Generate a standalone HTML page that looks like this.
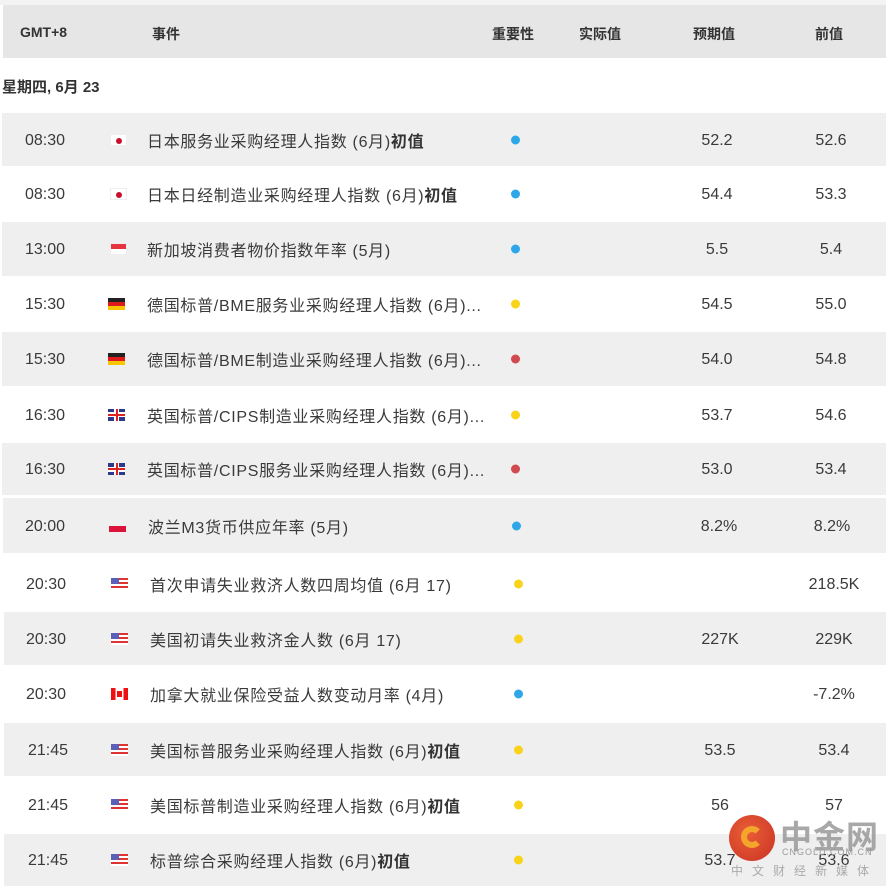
<!DOCTYPE html>
<html><head><meta charset="utf-8"><style>
*{margin:0;padding:0;box-sizing:border-box}
body{width:886px;height:886px;background:#fff;position:relative;overflow:hidden;font-family:"Liberation Sans","Noto Sans CJK SC",sans-serif;color:#3a3a3a;font-size:15px}
.a{position:absolute;white-space:nowrap}
.top{left:0;top:0;width:886px;height:5px;background:#f3f3f3}
.hd{left:3px;top:5px;width:883px;height:53px;background:#e6e6e6}
.h{font-size:14px;font-weight:bold;color:#333;top:24px}
.row{position:absolute;left:2px;width:884px}
.g{background:#efefef}
.t,.f,.e,.d,.v,.p{position:absolute;top:50%;transform:translateY(-50%)}
.t{width:60px;text-align:center;font-size:16px;margin-top:1px}
.e{font-size:16px;letter-spacing:0.7px}
.e b{font-weight:bold;color:#333}
.d{width:9px;height:9px;border-radius:50%}
.bl{background:#2ea7e8}.ye{background:#f9d21a}.re{background:#d04a4f}
.v,.p{width:80px;text-align:center;font-size:16px;margin-top:1px}
.f{width:17px;height:12px}
.uk{background:
 linear-gradient(#d22 0,#d22 0) center/100% 2px no-repeat,
 linear-gradient(#d22 0,#d22 0) center/2px 100% no-repeat,
 linear-gradient(#fff 0,#fff 0) center/100% 5px no-repeat,
 linear-gradient(#fff 0,#fff 0) center/5px 100% no-repeat,
 #2d3a8c}
.us{background:linear-gradient(#5a5fb8 0,#5a5fb8 0) 0 0/8px 6px no-repeat,repeating-linear-gradient(#d33 0,#d33 2px,#fff 2px,#fff 4px)}
</style></head><body>
<div class="a top"></div>
<div class="a hd"></div>
<div class="a h" style="left:20px">GMT+8</div>
<div class="a h" style="left:152px">事件</div>
<div class="a h" style="left:492px">重要性</div>
<div class="a h" style="left:579px">实际值</div>
<div class="a h" style="left:693px">预期值</div>
<div class="a h" style="left:815px">前值</div>
<div class="a" style="left:2px;top:76px;font-weight:bold;font-size:15px;color:#333">星期四, 6月 23</div>

<div class="row g" style="top:113px;height:53px"><span class="t" style="left:13px">08:30</span><span class="f" style="left:108px;background:#fff;border:1px solid #eee"><i style="position:absolute;left:5px;top:3px;width:6px;height:6px;border-radius:50%;background:#c8102e"></i></span><span class="e" style="left:145px">日本服务业采购经理人指数 (6月)<b>初值</b></span><span class="d bl" style="left:509px"></span><span class="v" style="left:675px">52.2</span><span class="p" style="left:789px">52.6</span></div>
<div class="row" style="top:166px;height:56px"><span class="t" style="left:13px">08:30</span><span class="f" style="left:108px;background:#fff;border:1px solid #eee"><i style="position:absolute;left:5px;top:3px;width:6px;height:6px;border-radius:50%;background:#c8102e"></i></span><span class="e" style="left:145px">日本日经制造业采购经理人指数 (6月)<b>初值</b></span><span class="d bl" style="left:509px"></span><span class="v" style="left:675px">54.4</span><span class="p" style="left:789px">53.3</span></div>
<div class="row g" style="top:222px;height:54px"><span class="t" style="left:13px">13:00</span><span class="f" style="left:108px;background:linear-gradient(#e53340 50%,#fff 50%);border:1px solid #eee"></span><span class="e" style="left:145px">新加坡消费者物价指数年率 (5月)</span><span class="d bl" style="left:509px"></span><span class="v" style="left:675px">5.5</span><span class="p" style="left:789px">5.4</span></div>
<div class="row" style="top:276px;height:56px"><span class="t" style="left:13px">15:30</span><span class="f" style="left:106px;background:linear-gradient(#222 33%,#dd1b1b 33%,#dd1b1b 66%,#f7c600 66%)"></span><span class="e" style="left:145px">德国标普/BME服务业采购经理人指数 (6月)...</span><span class="d ye" style="left:509px"></span><span class="v" style="left:675px">54.5</span><span class="p" style="left:789px">55.0</span></div>
<div class="row g" style="top:332px;height:54px"><span class="t" style="left:13px">15:30</span><span class="f" style="left:106px;background:linear-gradient(#222 33%,#dd1b1b 33%,#dd1b1b 66%,#f7c600 66%)"></span><span class="e" style="left:145px">德国标普/BME制造业采购经理人指数 (6月)...</span><span class="d re" style="left:509px"></span><span class="v" style="left:675px">54.0</span><span class="p" style="left:789px">54.8</span></div>
<div class="row" style="top:386px;height:57px"><span class="t" style="left:13px">16:30</span><span class="f uk" style="left:106px"></span><span class="e" style="left:145px">英国标普/CIPS制造业采购经理人指数 (6月)...</span><span class="d ye" style="left:509px"></span><span class="v" style="left:675px">53.7</span><span class="p" style="left:789px">54.6</span></div>
<div class="row g" style="top:443px;height:52px"><span class="t" style="left:13px">16:30</span><span class="f uk" style="left:106px"></span><span class="e" style="left:145px">英国标普/CIPS服务业采购经理人指数 (6月)...</span><span class="d re" style="left:509px"></span><span class="v" style="left:675px">53.0</span><span class="p" style="left:789px">53.4</span></div>
<div class="row g" style="top:498px;height:55px;left:3px"><span class="t" style="left:12px">20:00</span><span class="f" style="left:106px;background:linear-gradient(#f0f0f0 50%,#dc143c 50%)"></span><span class="e" style="left:145px">波兰M3货币供应年率 (5月)</span><span class="d bl" style="left:509px"></span><span class="v" style="left:676px">8.2%</span><span class="p" style="left:789px">8.2%</span></div>

<div class="row" style="top:556px;height:56px;left:4px"><span class="t" style="left:12px">20:30</span><span class="f us" style="left:107px"></span><span class="e" style="left:146px">首次申请失业救济人数四周均值 (6月 17)</span><span class="d ye" style="left:510px"></span><span class="p" style="left:790px">218.5K</span></div>
<div class="row g" style="top:612px;height:53px;left:4px"><span class="t" style="left:12px">20:30</span><span class="f us" style="left:107px"></span><span class="e" style="left:146px">美国初请失业救济金人数 (6月 17)</span><span class="d ye" style="left:510px"></span><span class="v" style="left:676px">227K</span><span class="p" style="left:790px">229K</span></div>
<div class="row" style="top:665px;height:58px;left:4px"><span class="t" style="left:12px">20:30</span><span class="f" style="left:107px;background:linear-gradient(90deg,#e11 27%,#fff 27%,#fff 73%,#e11 73%)"><i style="position:absolute;left:6px;top:3px;width:5px;height:6px;background:#e11"></i></span><span class="e" style="left:146px">加拿大就业保险受益人数变动月率 (4月)</span><span class="d bl" style="left:510px"></span><span class="p" style="left:790px">-7.2%</span></div>
<div class="row g" style="top:723px;height:53px;left:4px"><span class="t" style="left:14px">21:45</span><span class="f us" style="left:107px"></span><span class="e" style="left:146px">美国标普服务业采购经理人指数 (6月)<b>初值</b></span><span class="d ye" style="left:510px"></span><span class="v" style="left:676px">53.5</span><span class="p" style="left:790px">53.4</span></div>
<div class="row" style="top:776px;height:58px;left:4px"><span class="t" style="left:14px">21:45</span><span class="f us" style="left:107px"></span><span class="e" style="left:146px">美国标普制造业采购经理人指数 (6月)<b>初值</b></span><span class="d ye" style="left:510px"></span><span class="v" style="left:676px">56</span><span class="p" style="left:790px">57</span></div>
<div class="row g" style="top:834px;height:52px;left:4px"><span class="t" style="left:14px">21:45</span><span class="f us" style="left:107px"></span><span class="e" style="left:146px">标普综合采购经理人指数 (6月)<b>初值</b></span><span class="d ye" style="left:510px"></span><span class="v" style="left:676px">53.7</span><span class="p" style="left:790px">53.6</span></div>

<div class="a" style="left:729px;top:815px;width:46px;height:46px;border-radius:50%;background:radial-gradient(circle at 40% 40%,#e8562a,#c8281c);opacity:.95"></div>
<div class="a" style="left:741px;top:826px;width:22px;height:22px;border-radius:50%;border:6px solid #f3a52c;border-right-color:transparent"></div>
<div class="a" style="left:780px;top:812px;font-size:32px;font-weight:bold;color:#9a9a9a;letter-spacing:1px;opacity:.85">中金网</div>
<div class="a" style="left:782px;top:847px;font-size:9px;color:#9a9a9a;letter-spacing:1px">CNGOLD.COM.CN</div>
<div class="a" style="left:731px;top:862px;font-size:12px;color:#aaa;letter-spacing:9px">中文财经新媒体</div>
</body></html>
